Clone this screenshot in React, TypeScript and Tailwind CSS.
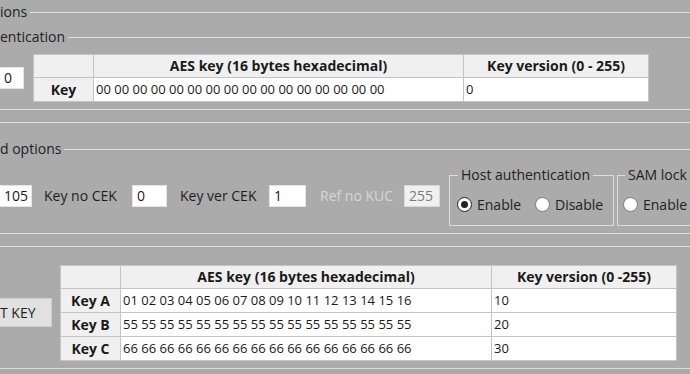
import React from "react";

const FONT = { fontFamily: '"Open Sans", "Noto Sans", Arial, sans-serif' };

function TitleRow({ text, className = "" }: { text: string; className?: string }) {
  return (
    <div className={`flex items-center h-[22px] ${className}`}>
      <span className="text-[14px] text-[#222] leading-none whitespace-nowrap">{text}</span>
      <div className="flex-1 h-px bg-[#dedede] ml-[3px]" />
    </div>
  );
}

function Line({ className = "" }: { className?: string }) {
  return <div className={`h-px bg-[#dedede] ${className}`} />;
}

function Radio({ checked, label, width }: { checked?: boolean; label: string; width?: string }) {
  return (
    <div className={`flex items-center shrink-0 ${width ?? ""}`}>
      <span
        className={`flex items-center justify-center w-[15px] h-[15px] rounded-full bg-white border ${
          checked ? "border-[#222]" : "border-[#777]"
        }`}
      >
        {checked && <span className="w-[7px] h-[7px] rounded-full bg-[#222]" />}
      </span>
      <span className="ml-[5px] text-[14px] text-[#222] leading-none whitespace-nowrap">{label}</span>
    </div>
  );
}

type Row = { head: string; key: string; ver: string };

function KeyTable({
  widths,
  rows,
  verTitle,
  className = "",
}: {
  widths: [number, number, number];
  rows: Row[];
  verTitle: string;
  className?: string;
}) {
  return (
    <table className={`border-collapse text-[#1a1a1a] ${className}`}>
      <colgroup>
        <col style={{ width: widths[0] }} />
        <col style={{ width: widths[1] }} />
        <col style={{ width: widths[2] }} />
      </colgroup>
      <thead>
        <tr className="h-[23px]">
          <th className="bg-[#f0f0f0] border border-[#c4c4c4]" />
          <th className="bg-[#f0f0f0] border border-[#c4c4c4] text-[14px] font-bold text-center leading-none">
            AES key (16 bytes hexadecimal)
          </th>
          <th className="bg-[#f0f0f0] border border-[#c4c4c4] text-[14px] font-bold text-center leading-none">
            {verTitle}
          </th>
        </tr>
      </thead>
      <tbody>
        {rows.map((r) => (
          <tr key={r.head} className="h-[24px]">
            <td className="bg-[#f0f0f0] border border-[#c4c4c4] text-[14px] font-bold text-center leading-none">
              {r.head}
            </td>
            <td className="bg-white border border-[#c4c4c4] pl-[2px] text-[13px] leading-none whitespace-nowrap">
              {r.key}
            </td>
            <td className="bg-white border border-[#c4c4c4] pl-[2px] text-[13px] leading-none">{r.ver}</td>
          </tr>
        ))}
      </tbody>
    </table>
  );
}

function TextBox({ value, className = "", disabled }: { value: string; className?: string; disabled?: boolean }) {
  return (
    <div
      className={`h-[22px] flex items-center pl-[4px] text-[14px] leading-none border shrink-0 ${
        disabled ? "bg-[#f0f0f0] border-[#d8d8d8] text-[#7a7a7a]" : "bg-white border-[#e4e4e4] text-[#1a1a1a]"
      } ${className}`}
    >
      {value}
    </div>
  );
}

export default function App() {
  const zeros = Array(16).fill("00").join(" ");
  return (
    <div className="w-[690px] h-[374px] bg-[#ababab] overflow-hidden flex flex-col" style={FONT}>
      <TitleRow text="ions" className="mt-[1px]" />
      <TitleRow text="entication" className="mt-[3px]" />
      <div className="flex items-start mt-[6px]">
        <TextBox value="0" className="w-[24px] mt-[13px] border-l-0 pl-0" />
        <KeyTable
          className="ml-[9px]"
          widths={[60, 370, 185]}
          verTitle="Key version (0 - 255)"
          rows={[{ head: "Key", key: zeros, ver: "0" }]}
        />
      </div>
      <Line className="mt-[7px]" />
      <Line className="mt-[12px]" />
      <TitleRow text="d options" className="mt-[15px]" />
      <div className="flex items-start">
        <div className="flex items-center shrink-0 mt-[25px] text-[14px] text-[#1e1e1e]">
          <TextBox value="105" className="w-[32px] border-l-0" />
          <span className="ml-[12px] w-[88px] whitespace-nowrap leading-none">Key no CEK</span>
          <TextBox value="0" className="w-[35px]" />
          <span className="ml-[13px] w-[89px] whitespace-nowrap leading-none">Key ver CEK</span>
          <TextBox value="1" className="w-[37px]" />
          <span className="ml-[14px] w-[84px] whitespace-nowrap leading-none text-[#d6d6d6]">Ref no KUC</span>
          <TextBox value="255" disabled className="w-[36px]" />
        </div>
        <fieldset className="ml-[9px] shrink-0 w-[165px] h-[60px] mt-[6px] border border-[#dedede] pl-[7px] pt-[13px]">
          <legend className="ml-[1px] px-[3px] text-[14px] text-[#222] leading-[18px] whitespace-nowrap">
            Host authentication
          </legend>
          <div className="flex items-center">
            <Radio checked label="Enable" width="w-[78px]" />
            <Radio label="Disable" />
          </div>
        </fieldset>
        <fieldset className="ml-[3px] w-[120px] shrink-0 h-[60px] mt-[6px] border border-r-0 border-[#dedede] pl-[5px] pt-[13px]">
          <legend className="ml-[2px] px-[3px] text-[14px] text-[#222] leading-[18px] whitespace-nowrap">
            SAM lock
          </legend>
          <div className="flex items-center">
            <Radio label="Enable" />
          </div>
        </fieldset>
      </div>
      <Line className="mt-[7px]" />
      <Line className="mt-[12px]" />
      <div className="flex items-start mt-[18px]">
        <button className="w-[52px] h-[29px] mt-[33px] bg-[#e1e1e1] border border-l-0 border-[#cfcfcf] text-[14px] text-[#1e1e1e] text-left leading-none">
          T KEY
        </button>
        <KeyTable
          className="ml-[8px]"
          widths={[60, 371, 185]}
          verTitle="Key version (0 -255)"
          rows={[
            { head: "Key A", key: "01 02 03 04 05 06 07 08 09 10 11 12 13 14 15 16", ver: "10" },
            { head: "Key B", key: Array(16).fill("55").join(" "), ver: "20" },
            { head: "Key C", key: Array(16).fill("66").join(" "), ver: "30" },
          ]}
        />
      </div>
      <Line className="mt-[7px]" />
    </div>
  );
}
